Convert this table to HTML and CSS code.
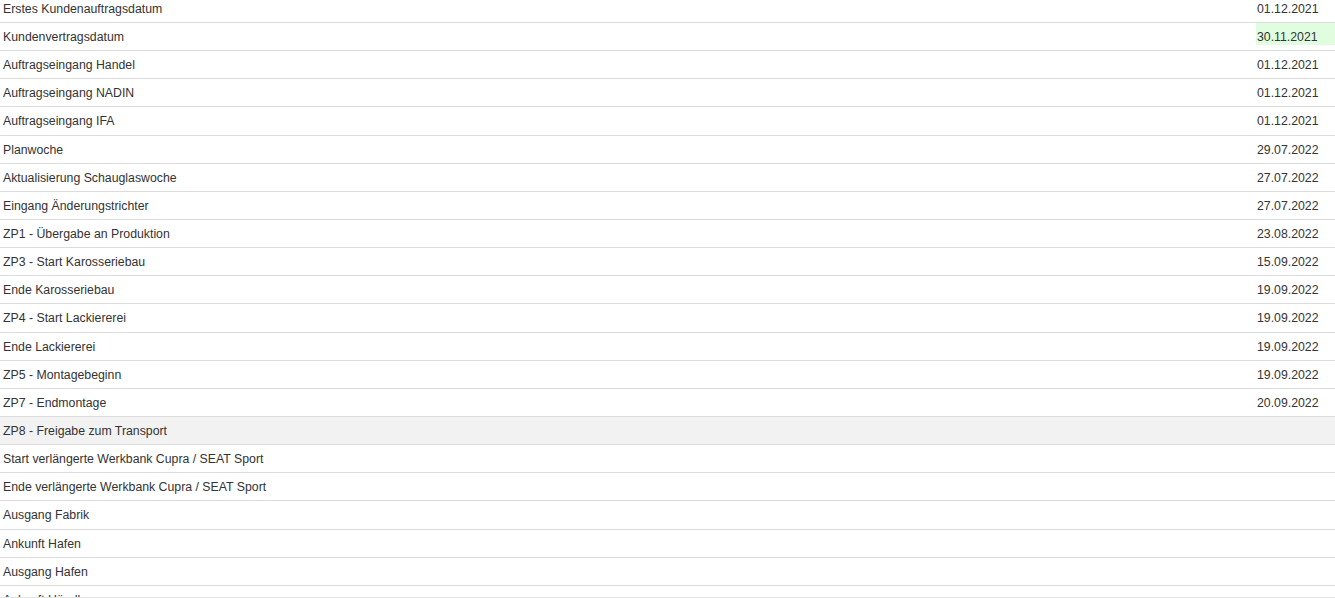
FILE: index.html
```html
<!DOCTYPE html>
<html lang="de">
<head>
<meta charset="utf-8">
<title>Termine</title>
<link rel="stylesheet" href="styles.css">
</head>
<body>
<div class="viewport">
  <div class="list">
    <div class="row"><span class="label">Erstes Kundenauftragsdatum</span><span class="value">01.12.2021</span></div>
    <div class="row"><span class="label">Kundenvertragsdatum</span><span class="value highlight">30.11.2021</span></div>
    <div class="row"><span class="label">Auftragseingang Handel</span><span class="value">01.12.2021</span></div>
    <div class="row"><span class="label">Auftragseingang NADIN</span><span class="value">01.12.2021</span></div>
    <div class="row"><span class="label">Auftragseingang IFA</span><span class="value">01.12.2021</span></div>
    <div class="row"><span class="label">Planwoche</span><span class="value">29.07.2022</span></div>
    <div class="row"><span class="label">Aktualisierung Schauglaswoche</span><span class="value">27.07.2022</span></div>
    <div class="row"><span class="label">Eingang Änderungstrichter</span><span class="value">27.07.2022</span></div>
    <div class="row"><span class="label">ZP1 - Übergabe an Produktion</span><span class="value">23.08.2022</span></div>
    <div class="row"><span class="label">ZP3 - Start Karosseriebau</span><span class="value">15.09.2022</span></div>
    <div class="row"><span class="label">Ende Karosseriebau</span><span class="value">19.09.2022</span></div>
    <div class="row"><span class="label">ZP4 - Start Lackiererei</span><span class="value">19.09.2022</span></div>
    <div class="row"><span class="label">Ende Lackiererei</span><span class="value">19.09.2022</span></div>
    <div class="row"><span class="label">ZP5 - Montagebeginn</span><span class="value">19.09.2022</span></div>
    <div class="row"><span class="label">ZP7 - Endmontage</span><span class="value">20.09.2022</span></div>
    <div class="row hovered"><span class="label">ZP8 - Freigabe zum Transport</span><span class="value"></span></div>
    <div class="row"><span class="label">Start verlängerte Werkbank Cupra / SEAT Sport</span><span class="value"></span></div>
    <div class="row"><span class="label">Ende verlängerte Werkbank Cupra / SEAT Sport</span><span class="value"></span></div>
    <div class="row"><span class="label">Ausgang Fabrik</span><span class="value"></span></div>
    <div class="row"><span class="label">Ankunft Hafen</span><span class="value"></span></div>
    <div class="row"><span class="label">Ausgang Hafen</span><span class="value"></span></div>
    <div class="row"><span class="label">Ankunft Händler</span><span class="value"></span></div>
    <div class="row"><span class="label">Auslieferung</span><span class="value"></span></div>
  </div>
</div>
</body>
</html>
```

FILE: styles.css
```css
html, body {
  margin: 0;
  padding: 0;
  background: #fff;
}

body {
  font-family: "Liberation Sans", Arial, sans-serif;
  font-size: 12.3px;
  color: #333;
}

.viewport {
  height: 597px;
  overflow: hidden;
  border-bottom: 1px solid #e4e4e4;
}

.list {
  margin-top: -5.15px;
}

.row {
  box-sizing: border-box;
  height: 28.15px;
  display: flex;
  align-items: stretch;
  justify-content: space-between;
  border-bottom: 1px solid #dcdcdc;
}

.row.hovered {
  background: #f2f2f2;
}

.label {
  padding-left: 3px;
  padding-top: 7px;
  line-height: 14px;
  white-space: nowrap;
}

.value {
  box-sizing: border-box;
  width: 79px;
  height: 22px;
  padding-top: 7px;
  padding-left: 1px;
  line-height: 14px;
  white-space: nowrap;
}

.value.highlight {
  background: #e0fde0;
}
```
